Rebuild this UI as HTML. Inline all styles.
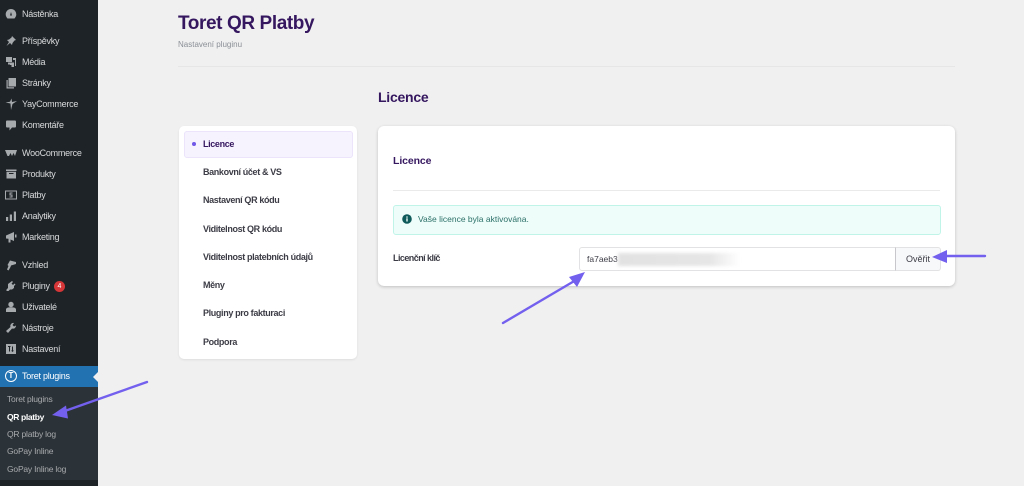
<!DOCTYPE html>
<html lang="cs"><head><meta charset="utf-8"><title>Toret QR Platby</title>
<style>
html,body{margin:0;padding:0;width:1024px;height:486px;overflow:hidden;background:#f0f0f0}
body{position:relative;font-family:"Liberation Sans",sans-serif;filter:blur(.3px)}
.a{position:absolute;white-space:nowrap}
#side{position:absolute;left:0;top:0;width:98px;height:486px;background:#1d2327}
.m{position:absolute;left:22px;font-size:9px;line-height:12px;color:#f0f0f1;opacity:.88;white-space:nowrap;letter-spacing:-.25px}
.i{position:absolute;left:5px;width:12px;height:12px}
.i *{fill:#a7aaad}
.s{position:absolute;left:7px;font-size:8.5px;line-height:12px;color:#a7aaad;white-space:nowrap;letter-spacing:-.2px}
.n{position:absolute;left:203px;font-size:9px;line-height:12px;font-weight:bold;color:#3c3c46;white-space:nowrap;letter-spacing:-.36px}
</style></head><body>
<div id="side">
<svg class="i" style="top:8px" viewBox="0 0 12 12"><path d="M6 1a5.300 5.300 0 0 0-5.300 5.300c0 1.700.7 3 1.800 4.200h7c1.100-1.200 1.800-2.500 1.800-4.200A5.300 5.300 0 0 0 6 1zM6 4l1 3.500H5z" fill-rule="evenodd"/></svg><div class="m" style="top:8px">Nástěnka</div>
<svg class="i" style="top:35px" viewBox="0 0 12 12"><path d="M7 1l4 4-1.500.5L7.500 8 7 10 5 8l-3.500 3L4 7 2 5l2-.5L6.500 2.500z"/></svg><div class="m" style="top:35px">Příspěvky</div>
<svg class="i" style="top:56px" viewBox="0 0 12 12"><path d="M1 1h6v5H1zM3 6.500h6V11H6.500V9H5v-.5H3zM8 2h3v8h-1V4H8z"/></svg><div class="m" style="top:56px">Média</div>
<svg class="i" style="top:77px" viewBox="0 0 12 12"><path d="M3.500 1H11v8.500H3.500zM1.500 3h1.200v7.300H9V11.500H1.500z"/></svg><div class="m" style="top:77px">Stránky</div>
<svg class="i" style="top:98px" viewBox="0 0 12 12"><path d="M6.500.5l.5 3.500 5-1-4.500 3L6 12l-.5-6.500L.500 4.500 5 3.800z"/></svg><div class="m" style="top:98px">YayCommerce</div>
<svg class="i" style="top:119px" viewBox="0 0 12 12"><path d="M2 1.500h8A1 1 0 0 1 11 2.500v5a1 1 0 0 1-1 1H7l-2.500 3V8.500H2a1 1 0 0 1-1-1v-5a1 1 0 0 1 1-1z"/></svg><div class="m" style="top:119px">Komentáře</div>
<svg class="i" style="top:147px" viewBox="0 0 12 12"><path d="M0 3h12L10 9 8.500 6 7 9 5.500 6 4 9H2.500z"/></svg><div class="m" style="top:147px">WooCommerce</div>
<svg class="i" style="top:168px" viewBox="0 0 12 12"><path d="M1 1.500h10.500V3H1zM1.500 3.700h9.500V10.500H1.500zM4 5v1h4.500V5z" fill-rule="evenodd"/></svg><div class="m" style="top:168px">Produkty</div>
<svg class="i" style="top:189px" viewBox="0 0 12 12"><path fill-rule="evenodd" d="M0 1.500h12v9H0zM1 2.500v7h10v-7zM4.500 3.500h3v1h-2v1h2v3h-3v-1h2v-1h-2z"/></svg><div class="m" style="top:189px">Platby</div>
<svg class="i" style="top:210px" viewBox="0 0 12 12"><path d="M1 7h2.200v4H1zM4.800 4.500H7V11H4.800zM8.800 1.500H11V11H8.800z"/></svg><div class="m" style="top:210px">Analytiky</div>
<svg class="i" style="top:231px" viewBox="0 0 12 12"><path d="M1 4.500L9 1v9L5.500 8.500V11.500H3.500V7.700L1 7.500zM10 3.500h1.500v3H10z"/></svg><div class="m" style="top:231px">Marketing</div>
<svg class="i" style="top:259px" viewBox="0 0 12 12"><path d="M5 1.500l6 1.500v2L6 6.500 5.500 8 3.500 11.500 2 10.500 3.500 7l-1-1z"/></svg><div class="m" style="top:259px">Vzhled</div>
<svg class="i" style="top:280px" viewBox="0 0 12 12"><path d="M7 1l1 1-1.500 1.500 1.500 1.500L9.500 3.500l1 1L9 6v2L7 9.500H5L3.500 11H1.500V9.500L3 8V4z"/></svg><div class="m" style="top:280px">Pluginy</div>
<div class="a" style="left:54px;top:281px;width:11px;height:11px;border-radius:50%;background:#d63638;color:#fff;font-size:7px;line-height:11px;text-align:center">4</div>
<svg class="i" style="top:301px" viewBox="0 0 12 12"><circle cx="6" cy="3.500" r="2.700"/><path d="M1 8.500c0-1.500 2-2.200 5-2.200s5 .7 5 2.200V11H1z"/></svg><div class="m" style="top:301px">Uživatelé</div>
<svg class="i" style="top:322px" viewBox="0 0 12 12"><path d="M11 3.500a3 3 0 0 1-4 3L3 11l-2-2 4.500-4a3 3 0 0 1 3.500-4L7.500 3l1.500 1.500z"/></svg><div class="m" style="top:322px">Nástroje</div>
<svg class="i" style="top:343px" viewBox="0 0 12 12"><path fill-rule="evenodd" d="M1 1h10v10H1zM3 3v1h1v4.500h1V4h.5V3zM7 3.500v4H6l1.500 1.500L9 7.500H8v-4z"/></svg><div class="m" style="top:343px">Nastavení</div>
<div class="a" style="left:0;top:366px;width:98px;height:21px;background:#2271b1"></div>
<div class="a" style="left:93px;top:372px;width:0;height:0;border:5px solid transparent;border-left:0;border-right:5px solid #f0f0f0"></div>
<div class="a" style="left:5px;top:370px;width:10px;height:10px;border:1.200px solid #fff;border-radius:50%;color:#fff;font-size:8px;font-weight:bold;line-height:10px;text-align:center">T</div>
<div class="m" style="top:370px;color:#fff;opacity:1">Toret plugins</div>
<div class="a" style="left:0;top:387px;width:98px;height:93px;background:#2c3338"></div>
<div class="s" style="top:393px">Toret plugins</div>
<div class="s" style="top:411px;color:#fff;font-weight:bold;letter-spacing:-.35px">QR platby</div>
<div class="s" style="top:428px">QR platby log</div>
<div class="s" style="top:445px">GoPay Inline</div>
<div class="s" style="top:463px">GoPay Inline log</div>
</div>

<div class="a" style="left:178px;top:12px;font-size:19px;line-height:24px;font-weight:bold;color:#35175f;letter-spacing:-.4px">Toret QR Platby</div>
<div class="a" style="left:178px;top:39px;font-size:8px;line-height:11px;color:#8a8f96">Nastavení pluginu</div>
<div class="a" style="left:178px;top:66px;width:777px;height:1px;background:#e6e6e6"></div>
<div class="a" style="left:378px;top:89px;font-size:14px;line-height:17px;font-weight:bold;color:#35175f;letter-spacing:-.25px">Licence</div>

<div class="a" style="left:179px;top:126px;width:178px;height:233px;background:#fff;border-radius:5px;box-shadow:0 1px 2px rgba(0,0,0,.08)"></div>
<div class="a" style="left:184px;top:131px;width:167px;height:25px;background:#f6f2fe;border:1px solid #ebe4fb;border-radius:3px"></div>
<div class="a" style="left:192px;top:142px;width:4px;height:4px;border-radius:50%;background:#7058e8"></div>
<div class="n" style="top:138px;color:#35175f">Licence</div>
<div class="n" style="top:166px">Bankovní účet &amp; VS</div>
<div class="n" style="top:194px">Nastavení QR kódu</div>
<div class="n" style="top:223px">Viditelnost QR kódu</div>
<div class="n" style="top:251px">Viditelnost platebních údajů</div>
<div class="n" style="top:279px">Měny</div>
<div class="n" style="top:307px">Pluginy pro fakturaci</div>
<div class="n" style="top:336px">Podpora</div>

<div class="a" style="left:378px;top:126px;width:577px;height:160px;background:#fff;border-radius:6px;box-shadow:0 1px 3px rgba(0,0,0,.2)"></div>
<div class="a" style="left:393px;top:155px;font-size:10.500px;line-height:13px;font-weight:bold;color:#35175f;letter-spacing:-.1px">Licence</div>
<div class="a" style="left:393px;top:190px;width:547px;height:1px;background:#eaeaea"></div>
<div class="a" style="left:393px;top:205px;width:546px;height:28px;background:#effdfa;border:1px solid #c0f4e8;border-radius:3px"></div>
<svg class="a" style="left:402px;top:214px" width="10" height="10" viewBox="0 0 10 10"><circle cx="5" cy="5" r="4.800" fill="#0e5a5a"/><rect x="4.300" y="4.300" width="1.400" height="3.200" fill="#effdfa"/><rect x="4.300" y="2.400" width="1.400" height="1.300" fill="#effdfa"/></svg>
<div class="a" style="left:418px;top:213px;font-size:8.500px;line-height:12px;color:#2b7068">Vaše licence byla aktivována.</div>
<div class="a" style="left:393px;top:252px;font-size:9px;line-height:12px;font-weight:bold;color:#3c3c46;letter-spacing:-.55px">Licenční klíč</div>
<div class="a" style="left:579px;top:247px;width:316px;height:22px;background:#fff;border:1px solid #e2e2e4;border-radius:3px 0 0 3px"></div>
<div class="a" style="left:587px;top:253px;font-size:8.500px;line-height:12px;color:#3c3c46">fa7aeb3</div>
<div class="a" style="left:618px;top:253px;width:122px;height:13px;background:linear-gradient(90deg,#e2e2e2,#e6e6e6 75%,#fff);filter:blur(1.500px)"></div>
<div class="a" style="left:895px;top:247px;width:44px;height:22px;background:#f7f8fa;border:1px solid #e2e2e4;border-left-color:#c8c8cc;border-radius:0 3px 3px 0"></div>
<div class="a" style="left:906px;top:253px;font-size:9px;line-height:12px;color:#3c3c46">Ověřit</div>

<svg class="a" style="left:0;top:0;pointer-events:none" width="1024" height="486" viewBox="0 0 1024 486">
<g stroke="#7360ee" stroke-width="2.400" fill="none" stroke-linecap="round">
<path d="M147 382L62 412"/><path d="M503 323L576 280"/><path d="M985 256H942"/>
</g>
<g fill="#7360ee">
<path d="M52 415L66 405.500L68 418.500z"/>
<path d="M585 272L569 277L577 287z"/>
<path d="M932 257L947 250V263z"/>
</g></svg>
</body></html>
